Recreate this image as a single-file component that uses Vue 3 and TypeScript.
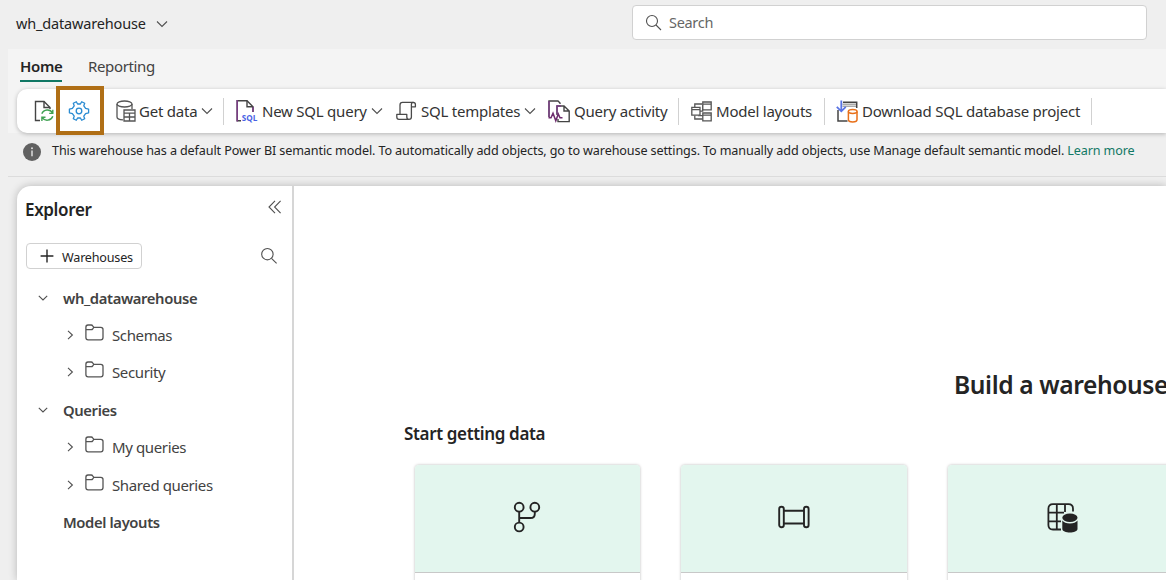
<script setup lang="ts">
interface TreeRow {
  label: string
  level: number
  open?: boolean
}

const rows: TreeRow[] = [
  { label: 'wh_datawarehouse', level: 0, open: true },
  { label: 'Schemas', level: 1 },
  { label: 'Security', level: 1 },
  { label: 'Queries', level: 0, open: true },
  { label: 'My queries', level: 1 },
  { label: 'Shared queries', level: 1 },
  { label: 'Model layouts', level: 0 },
]

const cards: string[] = ['branch', 'pipeline', 'table']
</script>

<template>
  <div class="app">
    <header class="top">
      <div class="crumb">
        <span class="crumb-name">wh_datawarehouse</span>
        <svg width="12" height="12" viewBox="0 0 12 12" class="line"><path d="M1 3.5 6 8.5 11 3.5" /></svg>
      </div>
      <div class="search">
        <svg width="18" height="18" viewBox="0 0 18 18" class="line"><circle cx="7" cy="7" r="5.5" /><path d="M11 11 16 16" /></svg>
        <span>Search</span>
      </div>
    </header>

    <div class="body">
      <section class="ribbon">
        <nav class="tabs">
          <span class="tab active">Home</span>
          <span class="tab second">Reporting</span>
        </nav>
        <div class="toolbar">
          <div class="tool refresh">
            <svg width="22" height="24" viewBox="0 0 22 24">
              <path d="M7 21.5H2.5V2.5H11L17 8.5V10" fill="none" stroke="#444" stroke-width="1.4" />
              <path d="M11 2.5V8.5H17" fill="none" stroke="#444" stroke-width="1.4" />
              <path d="M8.8 14.8A6 6 0 0 1 19.6 14M19.8 10.8V14.4H16.2M19.8 17.2A6 6 0 0 1 9.2 18.6M8.9 22V18.2H12.5" fill="none" stroke="#3fa152" stroke-width="1.4" />
            </svg>
          </div>
          <div class="gear">
            <svg width="22" height="22" viewBox="0 0 22 22">
              <path d="M9.6 4 8.3 1.7 5.3 3.3 6.2 5.8 4.4 8.4 1.4 9.2V12.8L4.4 13.6 6.2 16.2 5.3 18.7 8.3 20.3 9.6 18H12.4L13.7 20.3 16.7 18.7 15.8 16.2 17.6 13.6 20.6 12.8V9.2L17.6 8.4 15.8 5.8 16.7 3.3 13.7 1.7 12.4 4Z" fill="none" stroke="#2a8bd2" stroke-width="1.3" stroke-linejoin="round" />
              <circle cx="11" cy="11" r="2.8" fill="none" stroke="#2a8bd2" stroke-width="1.3" />
            </svg>
          </div>
          <div class="tool get-data">
            <svg width="20" height="22" viewBox="0 0 20 22">
              <path d="M1 4V17C1 18.6 3.5 19.7 7 19.9M16 4V9" fill="none" stroke="#555" stroke-width="1.3" />
              <ellipse cx="8.5" cy="4" rx="7.5" ry="3" fill="none" stroke="#555" stroke-width="1.3" />
              <path d="M8 10H19V21H8ZM8 13.2H19M8 17H19M13.5 13V21" fill="#fff" stroke="#555" stroke-width="1.3" />
            </svg>
            <span class="label">Get data</span>
            <svg width="12" height="12" viewBox="0 0 12 12" class="line"><path d="M1 3.5 6 8.5 11 3.5" /></svg>
          </div>
          <i class="sep"></i>
          <div class="tool new-query">
            <svg width="22" height="24" viewBox="0 0 22 24">
              <path d="M5 21.7H1.2V1.7H11L17 7.7V13" fill="none" stroke="#444" stroke-width="1.4" />
              <path d="M1.2 1V22.4M17 7.7V13" fill="none" stroke="#7b3c86" stroke-width="1.5" />
              <path d="M11 1.7V7.7H17" fill="none" stroke="#444" stroke-width="1.4" />
              <text x="5.8" y="22.3" class="sql" textLength="15.6" lengthAdjust="spacingAndGlyphs">SQL</text>
            </svg>
            <span class="label">New SQL query</span>
            <svg width="12" height="12" viewBox="0 0 12 12" class="line"><path d="M1 3.5 6 8.5 11 3.5" /></svg>
          </div>
          <div class="tool templates">
            <svg width="21" height="20" viewBox="0 0 21 20" fill="none" stroke="#4a4a4a" stroke-width="1.3" stroke-linejoin="round">
              <path d="M4 13.4V4Q4 1.4 6.5 1.4H17.2Q19.4 1.4 19.4 3.6V5.8H15.4M15.4 5.8V3.4Q15.4 1.4 17.3 1.4M15.4 5.8V16Q15.4 18.4 13 18.4H3Q.8 18.4.8 16V13.4H10.8V16Q10.8 18.4 13 18.4" />
            </svg>
            <span class="label">SQL templates</span>
            <svg width="12" height="12" viewBox="0 0 12 12" class="line"><path d="M1 3.5 6 8.5 11 3.5" /></svg>
          </div>
          <div class="tool activity">
            <svg width="22" height="23" viewBox="0 0 22 23" fill="none" stroke="#444" stroke-width="1.4">
              <path d="M1 17V1H10L12 3V4" />
              <path d="M9 15V6H16L21.2 11V21.6H10V19M16 6V11H21" fill="#fff" />
              <path d="M1 1V17M9 14V6H13" stroke="#7b3c86" />
              <path d="M.5 17.7H3L5 13.2 7.8 20.8 10.3 14 12 17.7H14.5" stroke="#6d2b6d" stroke-width="1.5" />
            </svg>
            <span class="label">Query activity</span>
          </div>
          <i class="sep"></i>
          <div class="tool model">
            <svg width="21" height="21" viewBox="0 0 21 21" fill="none" stroke="#555" stroke-width="1.3">
              <path d="M11.5 3H3.8V6M9 10.2H11.7V4M3.8 14.5V18H11.5M7.5 14.5V14.6H12" />
              <path d="M.8 6.4H9V14.2H.8ZM.8 8.6H9M11.8 1H20.2V8.8H11.8ZM11.8 3.2H20.2M11.8 12H20.2V19.8H11.8ZM11.8 14.2H20.2" fill="#fff" />
            </svg>
            <span class="label">Model layouts</span>
          </div>
          <i class="sep"></i>
          <div class="tool download">
            <svg width="22" height="23" viewBox="0 0 22 23" fill="none" stroke-width="1.5">
              <path d="M7 2.3H20.7V8M2 10V21H11.5" stroke="#444" />
              <path d="M6.5 4.3H20M6.5 6.3H20" stroke="#aaa" stroke-width="1.6" />
              <path d="M5.3.5V10.5M.8 6.8 5.3 11.3 9.8 6.8" stroke="#5a74e4" stroke-width="1.8" />
              <path d="M12.4 11.5V19.7C12.4 22.6 21 22.6 21 19.7V11.5" stroke="#e8701a" fill="#fff" />
              <ellipse cx="16.7" cy="11.5" rx="4.3" ry="1.9" stroke="#e8701a" fill="#fff" />
            </svg>
            <span class="label">Download SQL database project</span>
          </div>
          <i class="sep"></i>
        </div>
      </section>

      <div class="notice">
        <svg width="18" height="18" viewBox="0 0 18 18"><circle cx="9" cy="9" r="9" fill="#616161" /><path d="M9 7.6V13.2" stroke="#ddd" stroke-width="1.5" /><circle cx="9" cy="5.2" r="1" fill="#ddd" /></svg>
        <p class="message">This warehouse has a default Power BI semantic model. To automatically add objects, go to warehouse settings. To manually add objects, use Manage default semantic model. <a>Learn more</a></p>
      </div>

      <div class="workspace">
        <aside class="explorer">
          <div class="explorer-head">
            <h2>Explorer</h2>
            <svg width="14" height="14" viewBox="0 0 14 14" class="line"><path d="M7 .8 1 7 7 13.2M12.6.8 6.6 7 12.6 13.2" /></svg>
          </div>
          <div class="explorer-actions">
            <button class="add">
              <svg width="14" height="14" viewBox="0 0 14 14"><path d="M7 .6V13.4M.6 7H13.4" stroke="#242424" stroke-width="1.4" /></svg>
              <span>Warehouses</span>
            </button>
            <svg width="18" height="18" viewBox="0 0 18 18" class="line"><circle cx="7.4" cy="7.2" r="5.7" /><path d="M11.5 11.3 16.6 16.4" /></svg>
          </div>
          <ul class="tree">
            <li v-for="row in rows" :key="row.label" :class="['row', row.level ? 'child' : 'parent']">
              <span class="caret">
                <svg v-if="row.open" width="10" height="8" viewBox="0 0 10 8" class="line"><path d="M.8 1.8 5 6 9.2 1.8" /></svg>
                <svg v-else-if="row.level" width="8" height="10" viewBox="0 0 8 10" class="line"><path d="M2 .8 6.4 5 2 9.2" /></svg>
              </span>
              <svg v-if="row.level" class="folder" width="19" height="17" viewBox="0 0 19 17" fill="none" stroke="#555" stroke-width="1.3" stroke-linejoin="round">
                <path d="M.9 3.2Q.9 1 3 1H6.2Q7.2 1 7.7 1.8L8.8 3.4H15.8Q18 3.4 18 5.6V13.6Q18 15.8 15.8 15.8H3.1Q.9 15.8.9 13.6ZM.9 5.6H6.2Q7.2 5.6 7.7 5L8.8 3.4" />
              </svg>
              <span class="name">{{ row.label }}</span>
            </li>
          </ul>
        </aside>

        <main class="canvas">
          <h1>Build a warehouse</h1>
          <h3>Start getting data</h3>
          <div class="cards">
            <article v-for="card in cards" :key="card" class="card">
              <div class="art">
                <svg v-if="card === 'branch'" class="branch-icon" width="32" height="34" viewBox="0 0 32 34" fill="none" stroke="#242424" stroke-width="1.9">
                  <circle cx="8.2" cy="7.2" r="4.4" /><circle cx="23.8" cy="7.2" r="4.4" /><circle cx="8.2" cy="27" r="4.4" />
                  <path d="M8.2 11.6V22.6M8.2 18H19.5Q23.8 18 23.8 13.7V11.6" />
                </svg>
                <svg v-else-if="card === 'pipeline'" width="32" height="34" viewBox="0 0 32 34" fill="none" stroke="#242424" stroke-width="1.9">
                  <rect x="1.2" y="6.8" width="4.6" height="20.4" rx="2.3" /><rect x="26" y="6.8" width="4.6" height="20.4" rx="2.3" />
                  <path d="M5.8 10.7H26M5.8 23.5H26" />
                </svg>
                <svg v-else class="grid-icon" width="32" height="34" viewBox="0 0 32 34" fill="none" stroke="#242424" stroke-width="1.8">
                  <path d="M14 29.5H6Q1.4 29.5 1.4 25V8.8Q1.4 4.2 6 4.2H21.5Q26 4.2 26 8.8V11.5M1.4 12.6H17M1.4 21.4H14M9.8 4.2V29.5M18 4.2V12" />
                  <ellipse cx="22.9" cy="17.8" rx="7.6" ry="4.2" fill="#242424" stroke="none" />
                  <path d="M15.3 20.5Q17.5 23.4 22.9 23.4T30.5 20.5V29C30.5 33.6 15.3 33.6 15.3 29Z" fill="#242424" stroke="none" />
                </svg>
              </div>
            </article>
          </div>
        </main>
      </div>
    </div>
  </div>
</template>

<style>
html,
body {
  margin: 0;
  overflow: hidden;
  background: #efefef;
}
</style>

<style scoped>
* {
  box-sizing: border-box;
}
.app {
  width: 1166px;
  height: 580px;
  overflow: hidden;
  background: #efefef;
  color: #242424;
  font-family: "Noto Sans", "Open Sans", sans-serif;
  font-size: 15px;
  white-space: nowrap;
}
svg {
  display: block;
  flex: none;
}
.line {
  fill: none;
  stroke: #505050;
  stroke-width: 1.1;
}
.top {
  height: 49px;
  display: flex;
  justify-content: space-between;
  padding: 5px 19px 0 16px;
}
.crumb {
  display: flex;
  align-items: center;
  height: 37px;
}
.crumb-name {
  width: 140px;
  margin-top: -2px;
  font-size: 14.5px;
  letter-spacing: -0.17px;
}
.search {
  width: 515px;
  height: 35px;
  display: flex;
  align-items: center;
  gap: 6px;
  padding-left: 12px;
  border: 1px solid #d1d1d1;
  border-radius: 4px;
  background: #fff;
  color: #666;
  font-size: 14.5px;
  letter-spacing: -0.3px;
}
.search span {
  margin-top: -2px;
}
.body {
  margin-left: 8px;
  height: 531px;
  overflow: hidden;
}
.ribbon {
  height: 84px;
  background: #f4f4f4;
}
.tabs {
  height: 40px;
  display: flex;
  padding-left: 12px;
}
.tab {
  height: 33px;
  line-height: 35px;
  font-size: 15px;
  letter-spacing: -0.35px;
  color: #424242;
}
.active {
  width: 42px;
  border-bottom: 2px solid #117865;
  color: #242424;
  font-weight: 600;
}
.second {
  margin-left: 26px;
}
.toolbar {
  height: 44px;
  margin-left: 9px;
  display: flex;
  align-items: center;
  border-radius: 10px 0 0 10px;
  background: #fff;
  box-shadow: 0 1px 4px rgba(0, 0, 0, 0.25);
}
.tool {
  display: flex;
  align-items: center;
  height: 100%;
  color: #333;
  font-size: 15px;
  letter-spacing: -0.23px;
}
.label {
  flex: none;
}
.refresh {
  width: 39px;
  padding-left: 16px;
}
.gear {
  width: 48px;
  height: 49px;
  flex: none;
  display: flex;
  align-items: center;
  justify-content: center;
  margin-bottom: 1px;
  border: 4px solid #b06f16;
  padding: 1px 2px 0 0;
}
.get-data {
  width: 119px;
  padding-left: 12px;
}
.get-data .label {
  width: 65px;
  padding-left: 3px;
}
.sep {
  width: 1px;
  height: 27px;
  flex: none;
  background: #d1d1d1;
}
.new-query {
  width: 172px;
  padding-left: 12px;
}
.new-query .label {
  width: 113px;
  padding-left: 4px;
}
.sql {
  font: 700 8.5px "Open Sans", sans-serif;
  letter-spacing: 0;
  fill: #4862e4;
}
.templates {
  width: 152px;
}
.templates .label {
  width: 107px;
  padding-left: 4px;
}
.activity {
  width: 130px;
}
.activity .label {
  padding-left: 4px;
}
.model {
  width: 145px;
  padding-left: 12px;
}
.model .label {
  padding-left: 4px;
}
.download {
  width: 266px;
  padding-left: 11px;
}
.download .label {
  padding-left: 4px;
}
.notice {
  height: 44px;
  display: flex;
  align-items: flex-start;
  padding: 10px 0 0 15px;
  border-bottom: 1px solid #dcdcdc;
}
.message {
  margin: -1px 0 0 11px;
  font-size: 12.6px;
  letter-spacing: -0.117px;
  line-height: 18px;
}
.message a {
  color: #117865;
}
.workspace {
  height: 394px;
  margin: 9px 0 0 9px;
  display: flex;
  border-radius: 14px 0 0 0;
  background: #fff;
  box-shadow: 0 0 8px rgba(0, 0, 0, 0.24);
}
.explorer {
  width: 277px;
  border-right: 2px solid #d6d6d6;
}
.explorer-head {
  height: 57px;
  display: flex;
  justify-content: space-between;
  padding: 14px 10px 0 8px;
}
h2 {
  margin: 0;
  font-size: 17px;
  letter-spacing: -0.35px;
  line-height: 20px;
  font-weight: 600;
}
.explorer-actions {
  height: 26px;
  display: flex;
  align-items: center;
  justify-content: space-between;
  padding: 0 14px 0 9px;
}
.add {
  width: 116px;
  height: 26px;
  display: flex;
  align-items: center;
  gap: 8px;
  padding: 0 0 0 13px;
  border: 1px solid #d1d1d1;
  border-radius: 4px;
  background: #fff;
  color: #242424;
  font: 12.6px "Noto Sans", sans-serif;
  letter-spacing: -0.2px;
}
.add span {
  padding-top: 2px;
}
.tree {
  margin: 10px 0 0;
  padding: 0;
  list-style: none;
}
.row {
  height: 37.4px;
  display: flex;
  align-items: center;
  color: #424242;
  letter-spacing: -0.38px;
}
.caret {
  display: flex;
  flex: none;
}
.parent {
  padding-left: 21px;
  font-size: 14.8px;
  font-weight: 600;
}
.parent .caret {
  width: 25px;
}
.child {
  padding-left: 49px;
}
.child .caret {
  width: 19px;
}
.folder {
  margin: -5px 8px 0 0;
}
.canvas {
  flex: 1;
  overflow: hidden;
  padding: 184px 0 0 110px;
}
h1 {
  margin: 0 0 0 550px;
  font-size: 24.6px;
  letter-spacing: -0.4px;
  line-height: 30px;
  font-weight: 600;
}
h3 {
  margin: 24px 0 0;
  font-size: 17px;
  letter-spacing: -0.35px;
  line-height: 20px;
  font-weight: 600;
}
.cards {
  display: flex;
  gap: 41px;
  padding: 21px 0 0 11px;
}
.card {
  width: 225.4px;
  height: 240px;
  flex: none;
  border-radius: 4px;
  background: #fff;
  box-shadow: 0 0 3px rgba(0, 0, 0, 0.28);
}
.art {
  height: 108px;
  display: flex;
  align-items: center;
  justify-content: center;
  padding-bottom: 4px;
  border-bottom: 1px solid #c8c8c8;
  border-radius: 4px 4px 0 0;
  background: #e3f6ee;
}
.branch-icon {
  margin-right: 1px;
}
.grid-icon {
  margin-left: 5px;
}
</style>
